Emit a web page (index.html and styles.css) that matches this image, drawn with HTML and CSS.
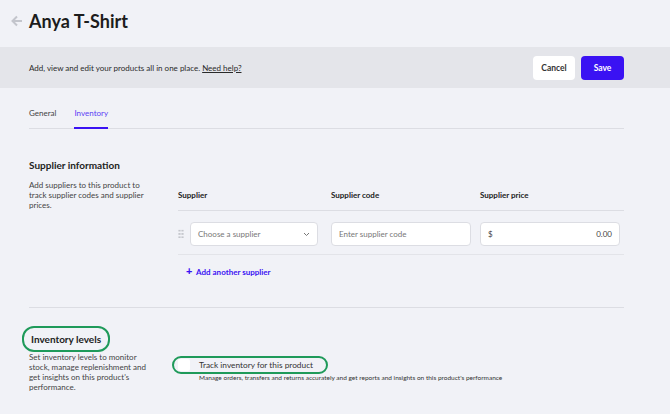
FILE: index.html
```html
<!DOCTYPE html>
<html>
<head>
<title>Anya T-Shirt</title>
<meta http-equiv="Content-Type" content="text/html; charset=UTF-8" />
<link rel="stylesheet" href="styles.css">
</head>
<body>

<div class="top">
  <svg class="back" width="12" height="12" viewBox="0 0 12 12"><path d="M11 6H2M6 1.5L1.5 6 6 10.5" fill="none" stroke="#c3c5cc" stroke-width="2"/></svg>
  <h1>Anya T-Shirt</h1>
</div>

<div class="banner">
  <p>Add, view and edit your products all in one place. <a href="#">Need help?</a></p>
  <div class="actions">
    <button class="btn cancel">Cancel</button>
    <button class="btn save">Save</button>
  </div>
</div>

<div class="page">
  <div class="tabs">
    <a class="tab">General</a>
    <a class="tab active">Inventory</a>
  </div>

  <div class="section supplier">
    <div class="intro">
      <h2>Supplier information</h2>
      <p>Add suppliers to this product to track supplier codes and supplier prices.</p>
    </div>
    <div class="table">
      <div class="thead">
        <span>Supplier</span>
        <span>Supplier code</span>
        <span>Supplier price</span>
      </div>
      <div class="trow">
        <div class="cell first">
          <span class="handle"></span>
          <div class="field select">Choose a supplier
            <svg width="7" height="5" viewBox="0 0 7 5"><path d="M1 1l2.5 2.5L6 1" fill="none" stroke="#777" stroke-width="1"/></svg>
          </div>
        </div>
        <div class="field ph">Enter supplier code</div>
        <div class="field price"><span class="cur">$</span><span>0.00</span></div>
      </div>
      <a class="add"><b>+</b> Add another supplier</a>
    </div>
  </div>

  <div class="section levels">
    <div class="intro">
      <h2 class="ring">Inventory levels</h2>
      <p>Set inventory levels to monitor stock, manage replenishment and get insights on this product's performance.</p>
    </div>
    <div class="track">
      <label class="check ring"><span class="box"></span>Track inventory for this product</label>
      <p class="hint">Manage orders, transfers and returns accurately and get reports and insights on this product's performance</p>
    </div>
  </div>
</div>

</body>
</html>
```

FILE: styles.css
```css
body {
  margin: 0;
  background: #f1f2f7;
  font-family: Lato, "Noto Sans", sans-serif;
  color: #222;
}

.top {
  display: flex;
  align-items: center;
  height: 41px;
  padding: 0 0 6px 11px;
}
.back { margin-right: 6px; }
h1 {
  margin: 0;
  font-size: 18px;
  font-weight: 700;
  color: #1c1c1c;
}

.banner {
  display: flex;
  align-items: center;
  justify-content: space-between;
  height: 41px;
  background: #e4e5ea;
  padding: 0 46px 0 29px;
}
.banner p {
  margin: 0;
  font-size: 8px;
  color: #2a2a2a;
}
.banner a { color: #2a2a2a; }
.actions { display: flex; gap: 6px; }
.btn {
  font-family: Lato, sans-serif;
  font-size: 8.5px;
  font-weight: 700;
  height: 24px;
  border-radius: 4px;
  border: 0;
}
.cancel { width: 42px; background: #fff; color: #333; }
.save { width: 43px; background: #3a12f3; color: #fff; }

.page { padding: 0 46px 0 29px; }

.tabs {
  display: flex;
  gap: 18px;
  border-bottom: 1px solid #dcdde3;
  padding-top: 20px;
}
.tab {
  font-size: 8px;
  color: #444;
  padding-bottom: 9px;
}
.tab.active {
  color: #5b3df5;
  border-bottom: 2px solid #3a12f3;
  margin-bottom: -1px;
}

.section {
  display: grid;
  grid-template-columns: 149px 1fr;
}
.supplier {
  padding-top: 30px;
  padding-bottom: 30px;
  border-bottom: 1px solid #dcdde3;
}
h2 {
  margin: 0 0 9px;
  font-size: 10px;
  font-weight: 700;
  color: #222;
}
.intro p {
  margin: 0;
  width: 118px;
  font-size: 8px;
  line-height: 10px;
  color: #444;
}

.table { padding-top: 31px; }
.thead, .trow {
  display: grid;
  grid-template-columns: 153px 149px 140px 1fr;
}
.thead {
  font-size: 8px;
  font-weight: 700;
  padding-bottom: 10px;
  border-bottom: 1px solid #dcdde3;
}
.trow {
  padding: 11px 0 8px;
  border-bottom: 1px solid #e3e4e9;
}
.cell.first { width: 140px; display: flex; align-items: center; gap: 6px; }
.handle {
  width: 6px;
  height: 10px;
  background-image: radial-gradient(circle, #c4c6cc 1px, transparent 1.2px);
  background-size: 3px 3.3px;
}
.field {
  width: 140px;
  height: 24px;
  box-sizing: border-box;
  background: #fff;
  border: 1px solid #dcdde3;
  border-radius: 4px;
  font-size: 8px;
  color: #777;
  display: flex;
  align-items: center;
  padding: 0 7px;
}
.select { flex: 1; width: auto; justify-content: space-between; }
.price { justify-content: space-between; color: #444; }
.add {
  display: block;
  margin: 9px 0 0 8px;
  font-size: 8px;
  font-weight: 700;
  color: #3a12f3;
}
.add b { font-size: 11px; margin-right: 2px; }

.levels { padding-top: 18px; }
.ring {
  border: 2px solid #1f9a5a;
  border-radius: 12px;
}
h2.ring {
  display: inline-block;
  margin: 0 0 0 -7px;
  padding: 5px 7px;
}
.levels .intro { display: flex; flex-direction: column; align-items: flex-start; }
.track { padding-top: 29px; }
.check {
  display: inline-flex;
  align-items: center;
  gap: 9px;
  margin-left: -6px;
  padding: 0 13px 0 4px;
  height: 14px;
  font-size: 8.3px;
  color: #333;
}
.box {
  width: 12px;
  height: 12px;
  background: #fff;
  border-radius: 2px;
}
.hint {
  margin: 0 0 0 21px;
  font-size: 6.5px;
  color: #333;
}
```
